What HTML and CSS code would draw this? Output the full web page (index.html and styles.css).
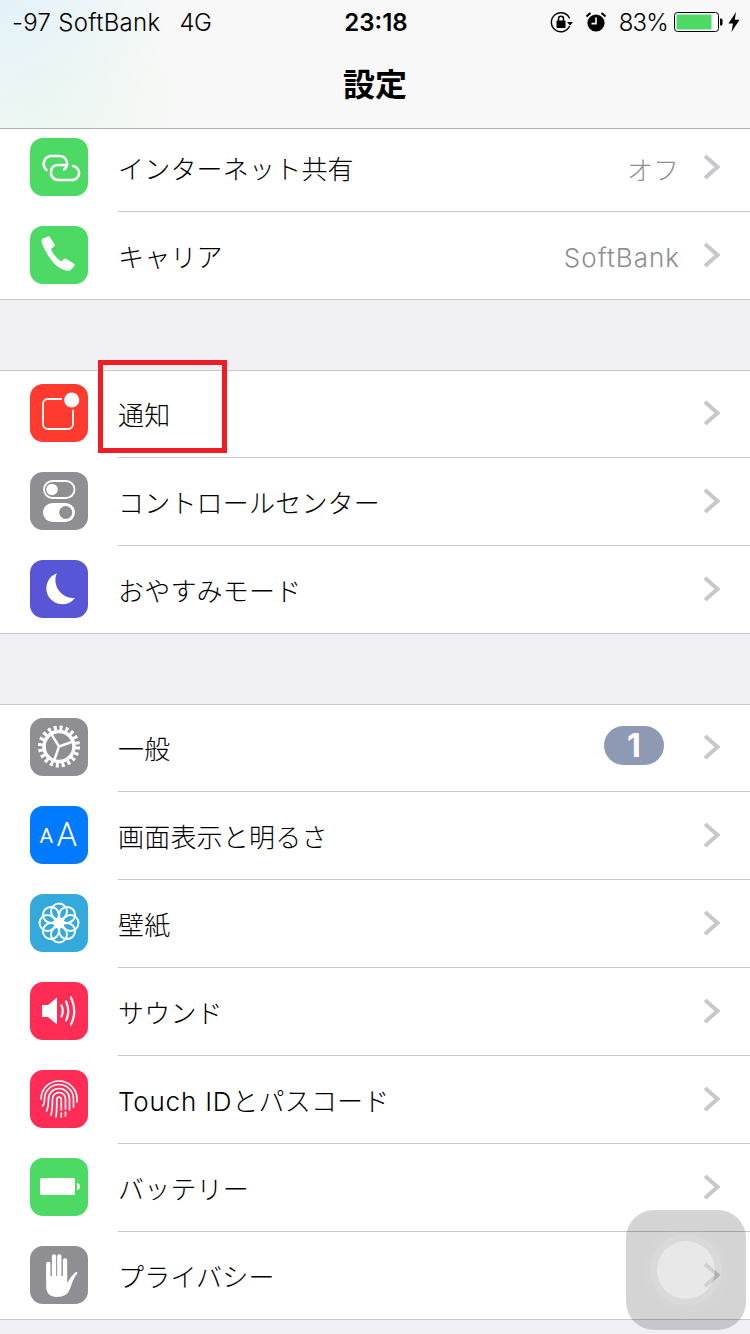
FILE: index.html
```html
<!DOCTYPE html>
<html lang="ja">
<head>
<meta charset="UTF-8">
<meta name="viewport" content="width=device-width, initial-scale=1.0">
<title>設定</title>
<link rel="stylesheet" href="styles.css">
</head>
<body>
<svg class="defs" width="0" height="0">
  <symbol id="chev" viewBox="0 0 17 26"><path d="M2 2l12.5 11L2 24" fill="none" stroke="#c7c7cc" stroke-width="4"/></symbol>
</svg>

<header class="navbar">
  <div class="status">
    <div class="status-left"><span class="st-carrier">-97 SoftBank</span><span class="st-net">4G</span></div>
    <div class="status-time">23:18</div>
    <div class="status-right">
      <svg class="st-lock" width="24" height="22" viewBox="0 0 24 22">
        <path d="M19.6 7.5A9.5 9.5 0 1 0 19.6 15" fill="none" stroke="#000" stroke-width="1.4"/>
        <path d="M17 11h6l-3 3.6z" fill="#000"/>
        <rect x="6.5" y="9.5" width="9" height="7.5" rx="1" fill="#000"/>
        <path d="M8.5 10V7.8a2.5 2.5 0 0 1 5 0V10" fill="none" stroke="#000" stroke-width="1.5"/>
      </svg>
      <svg class="st-alarm" width="20" height="20" viewBox="0 0 20 20">
        <circle cx="10" cy="11" r="8.6" fill="#000"/>
        <path d="M10 5.5V11.6H5.5" fill="none" stroke="#fff" stroke-width="1.6"/>
        <path d="M0.5 4.5L4.5 1M19.5 4.5L15.5 1" stroke="#000" stroke-width="2"/>
      </svg>
      <span class="st-pct">83%</span>
      <svg class="st-batt" width="49" height="20" viewBox="0 0 49 20">
        <rect x="0.5" y="0.5" width="44" height="19" rx="3" fill="#fff" stroke="#000"/>
        <rect x="2.5" y="2.5" width="35" height="15" fill="#4cd964"/>
        <path d="M46 6.5h1a1.5 1.5 0 0 1 1.5 1.5v4a1.5 1.5 0 0 1-1.5 1.5h-1z" fill="#000"/>
      </svg>
      <svg class="st-bolt" width="12" height="20" viewBox="0 0 12 20"><path d="M8 0L0.5 11.5H5L3.5 20 11.5 7.8H6.8z" fill="#000"/></svg>
    </div>
  </div>
  <h1 class="title">設定</h1>
</header>

<main class="list">
  <section class="group group-cut">
    <div class="row">
      <div class="icon green">
        <svg viewBox="0 0 58 58"><g fill="none" stroke="#fff" stroke-width="2.6" stroke-linecap="round">
          <path d="M16.500 32A8 8 0 0 1 20.500 18H29.500A7.500 7.500 0 0 1 34 31.500"/>
          <path d="M43 28A7 7 0 0 1 41 42H28A7.500 7.500 0 0 1 21 33Q22 27 28 27H35"/>
        </g></svg>
      </div>
      <div class="body"><span class="label">インターネット共有</span><span class="value">オフ</span><svg class="chev"><use href="#chev"/></svg></div>
    </div>
    <div class="row">
      <div class="icon green">
        <svg viewBox="0 0 58 58"><path fill="#fff" d="M14 12.500l3.500-2q1.500-.8 2.500.7l4.500 7q.8 1.300-.3 2.300l-3.200 2.500q2.500 7 10 12.500l3-2.500q1.200-.9 2.400-.1l7.500 4.800q1.400 1 .4 2.400l-2.500 3q-2 2.500-6 1.500-9.500-2.500-16-12.500-6.500-9.500-8-15.500-1-3.500 2.200-5.100z"/></svg>
      </div>
      <div class="body"><span class="label">キャリア</span><span class="value value-en">SoftBank</span><svg class="chev"><use href="#chev"/></svg></div>
    </div>
  </section>

  <section class="group">
    <div class="row">
      <div class="icon red">
        <svg viewBox="0 0 58 58">
          <rect x="13" y="15" width="30" height="30" rx="5" fill="none" stroke="#fff" stroke-width="1.800"/>
          <circle cx="41.700" cy="16" r="10" fill="#ff3b30"/>
          <circle cx="41.700" cy="16" r="7.600" fill="#fff"/>
        </svg>
      </div>
      <div class="body"><span class="label">通知</span><svg class="chev"><use href="#chev"/></svg></div>
    </div>
    <div class="row">
      <div class="icon gray">
        <svg viewBox="0 0 58 58">
          <rect x="14" y="9" width="30.500" height="17" rx="8.500" fill="none" stroke="#fff" stroke-width="1.800"/>
          <circle cx="22" cy="17.500" r="5.800" fill="#fff"/>
          <rect x="13" y="31" width="32" height="19" rx="9.500" fill="#fff"/>
          <circle cx="35.700" cy="40.500" r="6.500" fill="#8e8e93"/>
        </svg>
      </div>
      <div class="body"><span class="label">コントロールセンター</span><svg class="chev"><use href="#chev"/></svg></div>
    </div>
    <div class="row">
      <div class="icon purple">
        <svg viewBox="0 0 58 58"><path fill="#fff" d="M26.700 13.300A16 16 0 1 0 45 38 18 18 0 0 1 26.700 13.300z"/></svg>
      </div>
      <div class="body"><span class="label">おやすみモード</span><svg class="chev"><use href="#chev"/></svg></div>
    </div>
  </section>

  <section class="group">
    <div class="row">
      <div class="icon gray">
        <svg viewBox="0 0 58 58"><g fill="none" stroke="#fff">
          <circle cx="29" cy="28.500" r="15" stroke-width="3.500"/>
          <circle cx="29" cy="28.500" r="18.500" stroke-width="5" stroke-dasharray="3 2.812"/>
          <path d="M29 28.500L21.700 16.700M29 28.500L41.700 24M29 28.500L24 43" stroke-width="2.400"/>
        </g></svg>
      </div>
      <div class="body"><span class="label">一般</span><span class="badge">1</span><svg class="chev"><use href="#chev"/></svg></div>
    </div>
    <div class="row">
      <div class="icon blue">
        <svg viewBox="0 0 58 58"><text class="aa-small" x="9.500" y="37">A</text><text class="aa-big" x="26.500" y="40">A</text></svg>
      </div>
      <div class="body"><span class="label">画面表示と明るさ</span><svg class="chev"><use href="#chev"/></svg></div>
    </div>
    <div class="row">
      <div class="icon teal">
        <svg viewBox="0 0 58 58"><g fill="none" stroke="#fff" stroke-width="2">
          <circle cx="29" cy="17.500" r="8"/><circle cx="37.100" cy="20.900" r="8"/>
          <circle cx="40.500" cy="29" r="8"/><circle cx="37.100" cy="37.100" r="8"/>
          <circle cx="29" cy="40.500" r="8"/><circle cx="20.900" cy="37.100" r="8"/>
          <circle cx="17.500" cy="29" r="8"/><circle cx="20.900" cy="20.900" r="8"/>
        </g><circle cx="29" cy="29" r="3.200" fill="#fff"/></svg>
      </div>
      <div class="body"><span class="label">壁紙</span><svg class="chev"><use href="#chev"/></svg></div>
    </div>
    <div class="row">
      <div class="icon pink">
        <svg viewBox="0 0 58 58">
          <path fill="#fff" d="M12 23h6l9-7.500v27L18 35h-6z"/>
          <g fill="none" stroke="#fff" stroke-width="2.200" stroke-linecap="round">
            <path d="M31.500 23.500q2.500 5.500 0 11"/><path d="M36 19.500q4.500 9.500 0 19"/><path d="M41 15.500q6.500 13.500 0 27"/>
          </g>
        </svg>
      </div>
      <div class="body"><span class="label">サウンド</span><svg class="chev"><use href="#chev"/></svg></div>
    </div>
    <div class="row">
      <div class="icon pink">
        <svg viewBox="0 0 58 58"><g fill="none" stroke="#fff" stroke-width="1.700" stroke-linecap="round">
          <path d="M11 29a18 18 0 0 1 36 0v3"/>
          <path d="M12.500 36q2-2 2-7a14.500 14.500 0 0 1 29 0v8"/>
          <path d="M16.500 41q2-4 2-12a10.500 10.500 0 0 1 21 0v11"/>
          <path d="M21 45q1.500-5 1.500-16a6.500 6.500 0 0 1 13 0v10M35.500 42v4"/>
          <path d="M26 47q.8-6 .8-18a2.300 2.300 0 0 1 4.500 0v11M31.300 43v4"/>
        </g></svg>
      </div>
      <div class="body"><span class="label"><span class="latin">Touch ID</span>とパスコード</span><svg class="chev"><use href="#chev"/></svg></div>
    </div>
    <div class="row">
      <div class="icon green">
        <svg viewBox="0 0 58 58">
          <rect x="10" y="20" width="35" height="17" rx="1.500" fill="#fff"/>
          <path d="M47 25q3 .5 3 3.500t-3 3.500z" fill="#fff"/>
        </svg>
      </div>
      <div class="body"><span class="label">バッテリー</span><svg class="chev"><use href="#chev"/></svg></div>
    </div>
    <div class="row">
      <div class="icon gray">
        <svg viewBox="0 0 58 58">
          <g stroke="#fff" stroke-width="4.300" stroke-linecap="round">
            <path d="M18.300 18V32M24 10.500V30M29.300 10.500V30M35 14.500V32"/>
          </g>
          <path fill="#fff" d="M16.200 30H37.200V37Q41 30 45 26.500 47 25.500 47.500 27 43 33 40 43 37 51 27 51 16.200 51 16.200 40z"/>
        </svg>
      </div>
      <div class="body"><span class="label">プライバシー</span><svg class="chev"><use href="#chev"/></svg></div>
    </div>
  </section>
</main>

<div class="highlight"></div>
<div class="assist"><div class="ring ring-3"><div class="ring ring-2"><div class="ring ring-1"></div></div></div></div>
</body>
</html>
```

FILE: styles.css
```css
html, body {
  margin: 0;
  padding: 0;
}

body {
  position: relative;
  width: 750px;
  height: 1334px;
  overflow: hidden;
  background-color: #efeff4;
  color: #000;
  font-family: Inter, "Noto Sans CJK JP", sans-serif;
}

.defs {
  position: absolute;
}

/* top bar */
.navbar {
  height: 128px;
  border-bottom: 1px solid #b2b2b2;
  background-color: #f8f8f8;
  background-image:
    radial-gradient(circle 170px at 0 0, #e3f2f9, rgba(248, 248, 248, 0) 100%),
    radial-gradient(circle 150px at 40px 100px, #eef8ee, rgba(248, 248, 248, 0) 100%);
}

.status {
  display: grid;
  grid-template-columns: 1fr auto 1fr;
  align-items: center;
  height: 44px;
  padding: 0 10px 0 12px;
  font-size: 24px;
  font-weight: 300;
}

.status-left {
  display: flex;
  gap: 19px;
}

.st-carrier {
  letter-spacing: 0.3px;
}

.st-net {
  letter-spacing: -0.5px;
}

.status-time {
  font-weight: 600;
}

.status-right {
  display: flex;
  align-items: center;
  justify-content: flex-end;
}

.st-lock {
  margin-right: 12px;
}

.st-alarm {
  margin-right: 13px;
}

.st-pct {
  margin-right: 6px;
  letter-spacing: -0.8px;
}

.st-bolt {
  margin-left: 5px;
}

.title {
  margin: 0;
  height: 84px;
  line-height: 82px;
  text-align: center;
  font-size: 32px;
  font-weight: 700;
}

/* settings list */
.list {
  height: 1205px;
  overflow: hidden;
}

.group {
  margin-top: 70px;
  border-top: 1px solid #c8c7cc;
  background-color: #fff;
}

.group-cut {
  margin-top: -5px;
  border-top: 0;
}

.row {
  display: flex;
  height: 88px;
  box-sizing: border-box;
}

.group .row:first-child {
  margin-top: -1px;
}

.group-cut .row:first-child {
  margin-top: 0;
}

.row:last-child {
  border-bottom: 1px solid #c8c7cc;
}

.icon {
  flex: none;
  width: 58px;
  height: 58px;
  margin: 14px 30px 0;
  border-radius: 13px;
}

.icon svg {
  display: block;
  width: 58px;
  height: 58px;
}

.green { background-color: #4cd964; }
.red { background-color: #ff3b30; }
.gray { background-color: #8e8e93; }
.purple { background-color: #5856d6; }
.blue { background-color: #007aff; }
.teal { background-color: #34aadc; }
.pink { background-color: #ff2d55; }

.aa-small, .aa-big {
  fill: #fff;
  font-family: Roboto, sans-serif;
}

.aa-small {
  font-size: 21px;
}

.aa-big {
  font-size: 33px;
  font-weight: 300;
}

.body {
  flex: 1;
  display: flex;
  align-items: center;
  padding-right: 30px;
  border-bottom: 1px solid #c8c7cc;
}

.row:last-child .body {
  border-bottom: 0;
}

.label {
  flex: 1;
  padding-top: 4px;
  font-size: 26px;
  font-weight: 300;
  line-height: 36px;
  letter-spacing: 0.2px;
}

.latin {
  letter-spacing: 0.8px;
}

.value {
  margin-right: 24px;
  padding-top: 2px;
  font-size: 26px;
  font-weight: 300;
  color: #8e8e93;
}

.value-en {
  margin-right: 23px;
  padding-top: 4px;
  letter-spacing: 1px;
}

.badge {
  width: 60px;
  height: 39px;
  margin: -4px 39px 0 0;
  border-radius: 20px;
  background-color: #8e9ab3;
  color: #fff;
  font-size: 32px;
  font-weight: 700;
  line-height: 39px;
  text-align: center;
}

.chev {
  flex: none;
  width: 17px;
  height: 26px;
  margin-top: -2px;
}

/* red marker drawn over the screenshot */
.highlight {
  position: absolute;
  left: 98px;
  top: 360px;
  width: 119px;
  height: 83px;
  border: 5px solid #ee1c25;
}

.assist {
  position: absolute;
  left: 626px;
  top: 1210px;
  display: flex;
  align-items: center;
  justify-content: center;
  width: 120px;
  height: 120px;
  border-radius: 28px;
  background-color: rgba(0, 0, 0, 0.17);
}

.ring {
  display: flex;
  align-items: center;
  justify-content: center;
  border-radius: 50%;
  background-color: rgba(255, 255, 255, 0.1);
}

.ring-3 {
  width: 86px;
  height: 86px;
  background-color: rgba(255, 255, 255, 0.04);
}

.ring-2 {
  width: 72px;
  height: 72px;
}

.ring-1 {
  width: 58px;
  height: 58px;
  background-color: rgba(255, 255, 255, 0.4);
}
```
